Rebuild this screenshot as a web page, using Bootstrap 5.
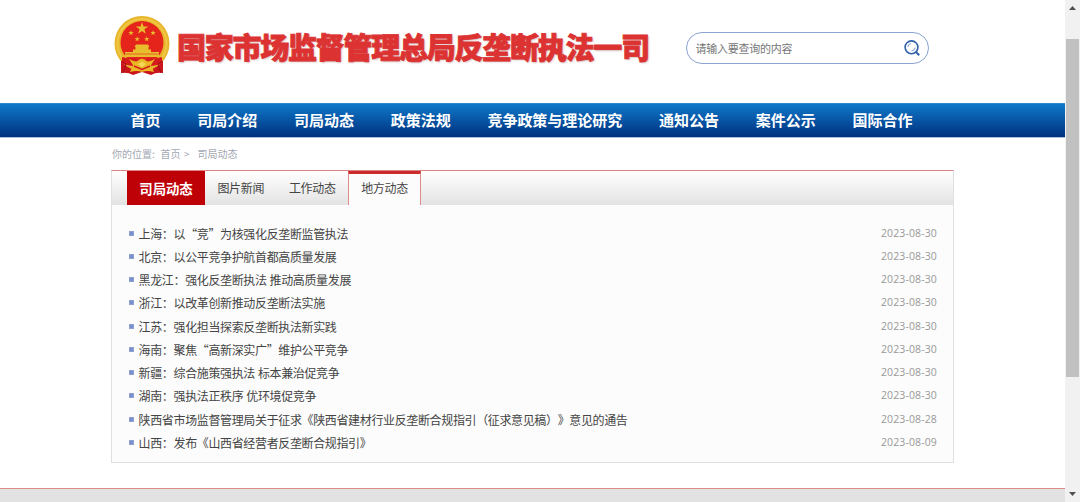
<!doctype html>
<html lang="zh-CN">
<head>
    <meta charset="UTF-8">
    <meta name="viewport" content="width=device-width, initial-scale=1">
    <title>国家市场监督管理总局反垄断执法一司</title>
    <link href="https://cdn.jsdelivr.net/npm/bootstrap@5.3.2/dist/css/bootstrap.min.css" rel="stylesheet">
    <style>
        body { font-family: "Noto Sans CJK SC", sans-serif; font-size: 12px; height: 502px; color: #444; background: #fff; text-spacing-trim: space-all; }
        a { color: inherit; text-decoration: none; }

        .site-header { height: 103px; padding-left: 113px; }
        .emblem { width: 58px; height: 62px; margin-top: 14px; }
        .site-title { width: 480px; margin: 27px 0 0 6px; font-size: 29px; line-height: 39px; font-weight: 900; letter-spacing: -1.25px; color: #dc3232; -webkit-text-stroke: .8px #dc3232; text-shadow: 1px 1px 2px #c9b0b0; }
        .search-box { width: 243px; height: 32px; margin: 32px 0 0 29px; padding: 0 8px 0 8.5px; border: 1px solid #8aa3d1; }
        .search-box input { font-size: 11px; letter-spacing: -.25px; box-shadow: none !important; }
        .search-box input::placeholder { color: #777; }

        .site-nav { height: 35px; padding-left: 130.5px; gap: 36.8px; border-top: 1px solid #2a88d0; border-bottom: 1px solid #a9bfdc; background: linear-gradient(#0f78c9, #00307f); }
        .site-nav a { font-size: 15px; line-height: 31px; font-weight: 700; color: #fff; letter-spacing: -.02px; }

        .crumbs { height: 32px; padding-left: 112px; font-size: 10px; line-height: 31px; color: #a3a8b2; }
        .crumbs .crumb-label { width: 48.5px; }
        .crumbs .crumb-home { width: 23.5px; }
        .crumbs .crumb-arrow { width: 13.5px; }

        .news-panel { width: 843px; height: 293px; margin-left: 111px; border: 1px solid #e0e0e0; border-top-color: #dd8585; background: #fcfcfc; }
        .tab-strip { height: 34px; padding-left: 15px; background: linear-gradient(#fff, #e3e3e3); }
        .tab-strip a { line-height: 34px; font-size: 12px; letter-spacing: -.35px; text-align: center; }
        .tab-strip .tab-main { width: 78px; background: #be0007; color: #fff; font-size: 13.4px; font-weight: 700; letter-spacing: -.05px; }
        .tab-strip .tab-plain { width: 71.5px; }
        .tab-strip .tab-current { width: 73px; line-height: 28px; border: 1px solid #e08a8a; border-top: 3px solid #cc2b2b; border-bottom: 0; background: #fcfcfc; }

        .news-list { padding: 16.4px 16px 0 17px; }
        .news-list li { height: 23.27px; line-height: 23px; letter-spacing: -.36px; word-spacing: .6px; white-space: nowrap; }
        .news-list li::before { content: ""; width: 5px; height: 5px; margin-right: 4.6px; background: #7590cf; border: .5px solid #8fa0cc; flex: none; }
        .news-list .long-row a { font-feature-settings: "chws" 0, "halt" 0; font-kerning: none; }
        .news-list time { font-family: "Open Sans", sans-serif; font-size: 10.5px; letter-spacing: .12px; color: #999; }

        .site-footer { height: 14px; border-top: 1px solid #e08a8a; background: #e2e2e2; }

        .page-scroll { width: 15px; background: #f1f1f1; padding-left: 1px; padding-right: 1px; }
        .page-scroll .thumb { height: 338px; background: #c1c1c1; }
        .page-scroll svg { width: 13px; height: 39px; }
        .page-scroll svg:last-child { height: 17px; }
    </style>
    <script src="https://cdn.jsdelivr.net/npm/bootstrap@5.3.2/dist/js/bootstrap.bundle.min.js"></script>
</head>
<body class="d-flex overflow-hidden">
<div class="flex-grow-1 d-flex flex-column">
    <header class="site-header d-flex align-items-start">
        <svg class="emblem" viewBox="0 0 58 62">
            <path d="M8 42 L8 59 Q15 58 20 61 L29 58 L38 61 Q43 58 50 59 L50 42Z" fill="#c9151b"/>
            <circle cx="29" cy="29.5" r="27.5" fill="#e8b62a"/>
            <circle cx="29" cy="29.5" r="24.5" fill="none" stroke="#efc645" stroke-width="2"/>
            <circle cx="29" cy="28.5" r="21.5" fill="#e5251c"/>
            <g fill="#e8bd2e">
                <path id="star" d="M29 8l1.5 4.4h4.7l-3.8 2.8 1.4 4.5-3.8-2.8-3.8 2.8 1.4-4.5-3.8-2.8h4.7z"/>
                <use href="#star" transform="translate(5.2 12.5) scale(.44)"/>
                <use href="#star" transform="translate(27.3 12.5) scale(.44)"/>
                <use href="#star" transform="translate(11.4 18.7) scale(.44)"/>
                <use href="#star" transform="translate(21 18.7) scale(.44)"/>
                <path d="M21.5 33l1.5-2.5h12l1.5 2.5h-1v2.5h2.5v2.5h8v5H12v-5h8v-2.5h2.5V33z"/>
            </g>
            <path d="M12 39.5h34v1H12z" fill="#e5251c" opacity=".6"/>
            <path d="M9 43 Q19 46 22 44 L29 47 L36 44 Q39 46 49 43 L49 50 L39 52 L29 57 L19 52 L9 50Z" fill="#d51b1c"/>
            <path d="M16 45 Q23 49 25 46.5 Q29 43 33 46.5 Q35 49 42 45 L38 51 L41 58 Q34 56 29 58 Q24 56 17 58 L20 51Z" fill="#e9b824"/>
            <path d="M25 50l4-2.5 4 2.5-4 3.5z" fill="#f5d65b"/>
            <path d="M21 52l8 3.5 8-3.5" stroke="#d51b1c" stroke-width="1.5" fill="none"/>
            <path d="M8 47l5 3-3 9M50 47l-5 3 3 9" stroke="#9d0d13" fill="none"/>
        </svg>
        <h1 class="site-title text-nowrap">国家市场监督管理总局反垄断执法一司</h1>
        <form class="search-box rounded-pill d-flex align-items-center">
            <input type="text" class="form-control border-0 bg-transparent p-0" placeholder="请输入要查询的内容">
            <svg width="16" height="16" viewBox="0 0 16 16" class="flex-shrink-0" fill="none" stroke="#2f62a8">
                <circle cx="7.5" cy="7.3" r="6.4" stroke-width="1.6"/>
                <path d="M3.8 7A3.8 3.8 0 0 1 7 3.6M11.2 7.5A4 4 0 0 1 7.5 11" stroke-width="1" stroke="#7f9fce"/>
                <path d="M11.8 11.8l3.4 3.4" stroke-width="2"/>
            </svg>
        </form>
    </header>

    <nav class="site-nav d-flex text-nowrap">
        <a href="#">首页</a>
        <a href="#">司局介绍</a>
        <a href="#">司局动态</a>
        <a href="#">政策法规</a>
        <a href="#">竞争政策与理论研究</a>
        <a href="#">通知公告</a>
        <a href="#">案件公示</a>
        <a href="#">国际合作</a>
    </nav>

    <div class="crumbs d-flex">
        <span class="crumb-label">你的位置:</span>
        <a href="#" class="crumb-home">首页</a>
        <span class="crumb-arrow">&gt;</span>
        <a href="#">司局动态</a>
    </div>

    <main class="news-panel">
        <div class="tab-strip d-flex">
            <a href="#" class="tab-main">司局动态</a>
            <a href="#" class="tab-plain">图片新闻</a>
            <a href="#" class="tab-plain">工作动态</a>
            <a href="#" class="tab-current">地方动态</a>
        </div>
        <ul class="news-list list-unstyled mb-0">
            <li class="d-flex align-items-center"><a href="#">上海：以“竞”为核强化反垄断监管执法</a><time class="ms-auto">2023-08-30</time></li>
            <li class="d-flex align-items-center"><a href="#">北京：以公平竞争护航首都高质量发展</a><time class="ms-auto">2023-08-30</time></li>
            <li class="d-flex align-items-center"><a href="#">黑龙江：强化反垄断执法 推动高质量发展</a><time class="ms-auto">2023-08-30</time></li>
            <li class="d-flex align-items-center"><a href="#">浙江：以改革创新推动反垄断法实施</a><time class="ms-auto">2023-08-30</time></li>
            <li class="d-flex align-items-center"><a href="#">江苏：强化担当探索反垄断执法新实践</a><time class="ms-auto">2023-08-30</time></li>
            <li class="d-flex align-items-center"><a href="#">海南：聚焦“高新深实广”维护公平竞争</a><time class="ms-auto">2023-08-30</time></li>
            <li class="d-flex align-items-center"><a href="#">新疆：综合施策强执法 标本兼治促竞争</a><time class="ms-auto">2023-08-30</time></li>
            <li class="d-flex align-items-center"><a href="#">湖南：强执法正秩序 优环境促竞争</a><time class="ms-auto">2023-08-30</time></li>
            <li class="d-flex align-items-center long-row"><a href="#">陕西省市场监督管理局关于征求《陕西省建材行业反垄断合规指引（征求意见稿）》意见的通告</a><time class="ms-auto">2023-08-28</time></li>
            <li class="d-flex align-items-center"><a href="#">山西：发布《山西省经营者反垄断合规指引》</a><time class="ms-auto">2023-08-09</time></li>
        </ul>
    </main>

    <footer class="site-footer mt-auto"></footer>
</div>

<div class="page-scroll flex-shrink-0 d-flex flex-column">
    <svg viewBox="0 0 13 39"><path d="M3 10l3.5-4 3.5 4z" fill="#505050"/></svg>
    <div class="thumb"></div>
    <svg class="mt-auto" viewBox="0 0 13 17"><path d="M3 7h7l-3.5 4z" fill="#505050"/></svg>
</div>
</body>
</html>
